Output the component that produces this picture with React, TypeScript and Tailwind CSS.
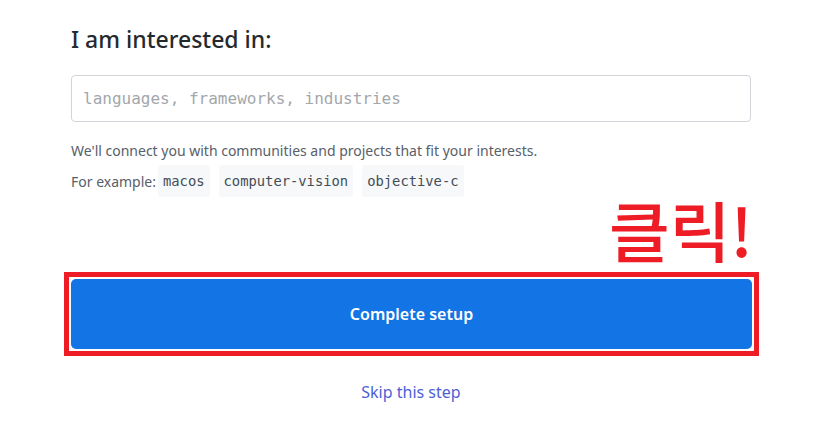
import React from "react";

const tags = ["macos", "computer-vision", "objective-c"];

export default function App() {
    return (
        <div
            className="w-[827px] h-[447px] bg-white overflow-hidden"
            style={{ fontFamily: '"Noto Sans", "Liberation Sans", sans-serif' }}
        >
            <div className="ml-[71px] w-[680px] pt-[23px]">
                <h2 className="text-[23px] leading-[32px] font-medium text-[#24292e]">I am interested in:</h2>

                <input
                    type="text"
                    placeholder="languages, frameworks, industries"
                    className="mt-[20px] block w-full h-[47px] px-[11px] border border-[#d1d5da] rounded-[4px] text-[16px] text-[#24292e] placeholder:text-[#a3a7ac] outline-none"
                    style={{ fontFamily: '"DejaVu Sans Mono", "Liberation Mono", monospace' }}
                />

                <p className="mt-[19px] text-[14px] leading-[20px] text-[#586069]">
                    We'll connect you with communities and projects that fit your interests.
                </p>

                <div className="mt-[4px] flex items-center gap-[9px] text-[14px] text-[#586069]">
                    <span className="-mr-[7px]">For example:</span>
                    {tags.map((t) => (
                        <span
                            key={t}
                            className="h-[32px] px-[5px] flex items-center rounded-[3px] bg-[#f6f8fa] text-[13.8px] text-[#444d56]"
                            style={{ fontFamily: '"DejaVu Sans Mono", "Liberation Mono", monospace' }}
                        >
                            {t}
                        </span>
                    ))}
                </div>

                <div className="flex justify-end h-[75px]">
                    <span
                        className="text-[66px] leading-[62px] font-medium text-[#ee1c25] -mr-[2px]"
                        style={{ fontFamily: '"Noto Sans CJK KR", "Noto Sans", sans-serif' }}
                    >
                        클릭!
                    </span>
                </div>

                <div className="-ml-[7px] -mr-[8px] border-[5px] border-[#ee1c25] p-[2px]">
                    <button className="w-full h-[70px] rounded-[5px] bg-[#1374e5] text-white text-[16px] font-semibold">
                        Complete setup
                    </button>
                </div>

                <div className="mt-[24px] text-center">
                    <a className="text-[16px] text-[#4d5fd6]">Skip this step</a>
                </div>
            </div>
        </div>
    );
}
